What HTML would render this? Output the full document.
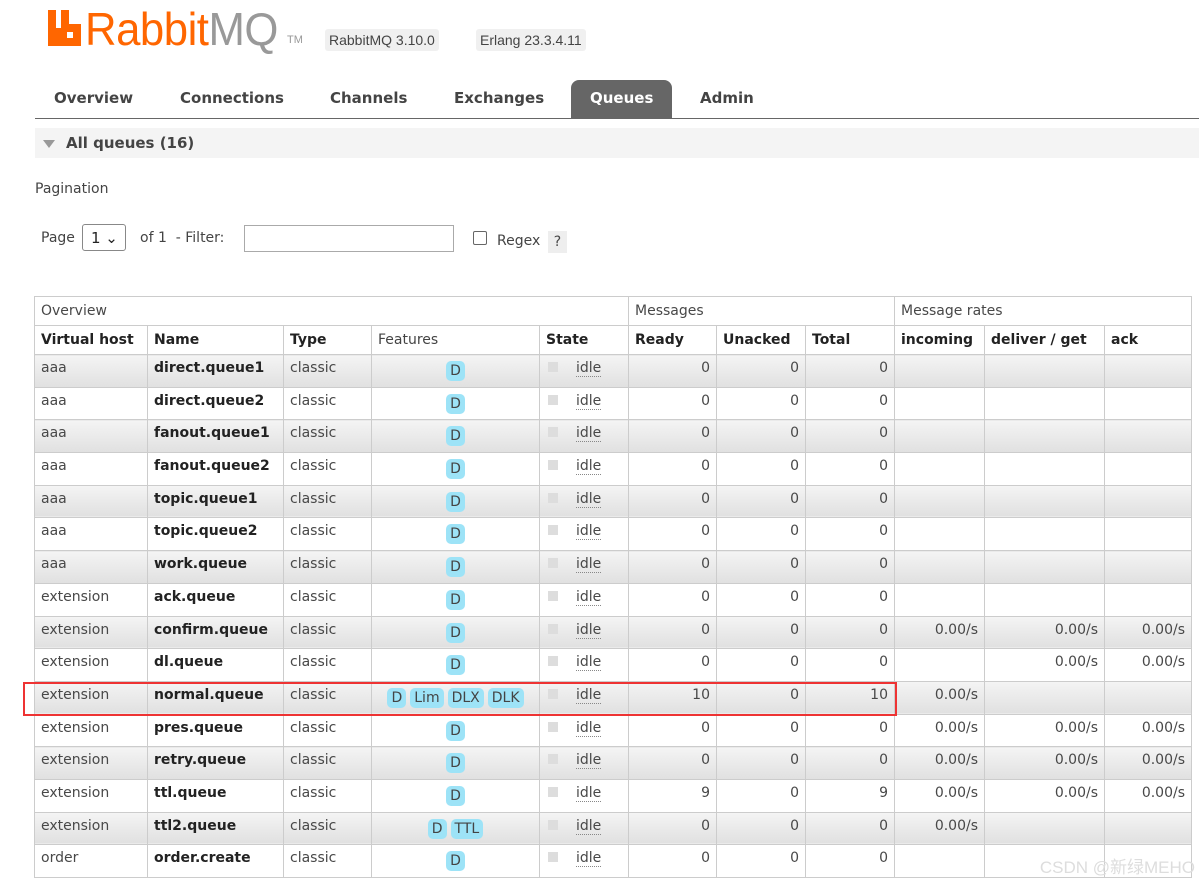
<!DOCTYPE html>
<html><head><meta charset="utf-8"><style>
body{margin:0;width:1199px;height:886px;overflow:hidden;background:#fff;font-family:Verdana,"DejaVu Sans","Liberation Sans",sans-serif;color:#484848;position:relative}
.logo{position:absolute;left:85px;top:2px;font-family:"Liberation Sans",sans-serif;font-size:46px;letter-spacing:-0.5px;transform:scaleX(0.95);transform-origin:left top;white-space:nowrap}
.logo .r{color:#f60}.logo .m{color:#999}
.tm{position:absolute;left:287px;top:34px;font-size:11px;color:#999;font-family:"Liberation Sans",sans-serif}
.ver{position:absolute;top:29px;height:22px;line-height:22px;background:#f0f0f0;border-radius:3px;padding:0 4px;font-size:14px;color:#444;font-family:"Liberation Sans",sans-serif}
.nav{position:absolute;top:80px;left:35px;right:0;height:38px;border-bottom:1px solid #666}
.nav span{position:absolute;top:0;height:38px;line-height:37px;font-size:15px;font-weight:bold;color:#444}
.nav .act{background:#666;color:#fff;border-radius:8px 8px 0 0;padding:0 19px}
.sec{position:absolute;left:35px;right:0;top:128px;height:30px;background:#f4f4f4}
.sec b{position:absolute;left:31px;top:6px;font-size:15px;color:#444}
.tri{position:absolute;left:8px;top:12px;border-left:6px solid transparent;border-right:6px solid transparent;border-top:8px solid #999}
.lbl{position:absolute;font-size:14px;color:#444}
table{position:absolute;left:34px;top:296px;border-collapse:collapse;table-layout:fixed;font-size:14px}
td,th{border:1px solid #ccc;padding:0 6px;white-space:nowrap;overflow:hidden;text-align:left}
th{font-weight:normal;height:28px}
tr.h2 th{font-weight:bold;color:#222}
tr.h2 th.n{font-weight:normal;color:#444}
tbody tr{height:32.7px}
tbody td{height:30px;line-height:27px;vertical-align:top}
tbody tr:nth-child(odd) td{background:linear-gradient(#f4f4f4,#e0e0e0)}
td.nm{font-weight:bold;color:#222}
td.r{text-align:right}
td.f{text-align:center}
.b{display:inline-block;background:#9de3f7;border-radius:5px;padding:0 4px;margin:0 2px;line-height:20px;color:#444;position:relative;top:3px}
.st{display:inline-block;width:10px;height:10px;background:#ddd;margin:0 18px 0 2px}
.idle{border-bottom:1px dotted #888}
.hl{position:absolute;left:23px;top:682px;width:870px;height:30px;border:2px solid #e33}
.wm{position:absolute;right:4px;bottom:8px;font-size:17px;color:#ddd;font-family:"Liberation Sans","Noto Sans CJK SC",sans-serif}
</style></head><body>
<svg style="position:absolute;left:48px;top:10px" width="33" height="36" viewBox="0 0 33 36"><path d="M0 0h8v18h5V0h8v14h12v22H0z" fill="#f60"/><rect x="19" y="22" width="6" height="6" fill="#fff"/></svg>
<div class="logo"><span class="r">Rabbit</span><span class="m">MQ</span></div>
<div class="tm">TM</div>
<div class="ver" style="left:325px">RabbitMQ 3.10.0</div>
<div class="ver" style="left:476px">Erlang 23.3.4.11</div>
<div class="nav">
<span style="left:19px">Overview</span><span style="left:145px">Connections</span><span style="left:295px">Channels</span><span style="left:419px">Exchanges</span><span class="act" style="left:536px">Queues</span><span style="left:665px">Admin</span>
</div>
<div class="sec"><div class="tri"></div><b>All queues (16)</b></div>
<div class="lbl" style="left:35px;top:181px">Pagination</div>
<div class="lbl" style="left:41px;top:230px">Page</div>
<div style="position:absolute;left:82px;top:224px;width:44px;height:27px;border:1px solid #888;border-radius:3px;font-size:15px;line-height:27px;padding-left:8px;box-sizing:border-box;color:#222">1 ⌄</div>
<div class="lbl" style="left:140px;top:230px">of 1 &nbsp;- Filter:</div>
<div style="position:absolute;left:244px;top:225px;width:210px;height:27px;border:1px solid #aaa;box-sizing:border-box"></div>
<div style="position:absolute;left:473px;top:231px;width:12px;height:12px;border:1px solid #666;border-radius:2px"></div>
<div class="lbl" style="left:497px;top:233px">Regex</div>
<div style="position:absolute;left:548px;top:231px;width:19px;height:22px;background:#eee;font-size:14px;text-align:center;line-height:22px">?</div>
<table>
<colgroup><col style="width:113px"><col style="width:136px"><col style="width:88px"><col style="width:168px"><col style="width:89px"><col style="width:88px"><col style="width:89px"><col style="width:89px"><col style="width:90px"><col style="width:120px"><col style="width:87px"></colgroup>
<thead>
<tr><th colspan="5">Overview</th><th colspan="3">Messages</th><th colspan="3">Message rates</th></tr>
<tr class="h2"><th>Virtual host</th><th>Name</th><th>Type</th><th class="n">Features</th><th>State</th><th>Ready</th><th>Unacked</th><th>Total</th><th>incoming</th><th>deliver / get</th><th>ack</th></tr>
</thead>
<tbody>
<tr><td>aaa</td><td class="nm">direct.queue1</td><td>classic</td><td class="f"><span class="b">D</span></td><td><span class="st"></span><span class="idle">idle</span></td><td class="r">0</td><td class="r">0</td><td class="r">0</td><td></td><td></td><td></td></tr>
<tr><td>aaa</td><td class="nm">direct.queue2</td><td>classic</td><td class="f"><span class="b">D</span></td><td><span class="st"></span><span class="idle">idle</span></td><td class="r">0</td><td class="r">0</td><td class="r">0</td><td></td><td></td><td></td></tr>
<tr><td>aaa</td><td class="nm">fanout.queue1</td><td>classic</td><td class="f"><span class="b">D</span></td><td><span class="st"></span><span class="idle">idle</span></td><td class="r">0</td><td class="r">0</td><td class="r">0</td><td></td><td></td><td></td></tr>
<tr><td>aaa</td><td class="nm">fanout.queue2</td><td>classic</td><td class="f"><span class="b">D</span></td><td><span class="st"></span><span class="idle">idle</span></td><td class="r">0</td><td class="r">0</td><td class="r">0</td><td></td><td></td><td></td></tr>
<tr><td>aaa</td><td class="nm">topic.queue1</td><td>classic</td><td class="f"><span class="b">D</span></td><td><span class="st"></span><span class="idle">idle</span></td><td class="r">0</td><td class="r">0</td><td class="r">0</td><td></td><td></td><td></td></tr>
<tr><td>aaa</td><td class="nm">topic.queue2</td><td>classic</td><td class="f"><span class="b">D</span></td><td><span class="st"></span><span class="idle">idle</span></td><td class="r">0</td><td class="r">0</td><td class="r">0</td><td></td><td></td><td></td></tr>
<tr><td>aaa</td><td class="nm">work.queue</td><td>classic</td><td class="f"><span class="b">D</span></td><td><span class="st"></span><span class="idle">idle</span></td><td class="r">0</td><td class="r">0</td><td class="r">0</td><td></td><td></td><td></td></tr>
<tr><td>extension</td><td class="nm">ack.queue</td><td>classic</td><td class="f"><span class="b">D</span></td><td><span class="st"></span><span class="idle">idle</span></td><td class="r">0</td><td class="r">0</td><td class="r">0</td><td></td><td></td><td></td></tr>
<tr><td>extension</td><td class="nm">confirm.queue</td><td>classic</td><td class="f"><span class="b">D</span></td><td><span class="st"></span><span class="idle">idle</span></td><td class="r">0</td><td class="r">0</td><td class="r">0</td><td class="r">0.00/s</td><td class="r">0.00/s</td><td class="r">0.00/s</td></tr>
<tr><td>extension</td><td class="nm">dl.queue</td><td>classic</td><td class="f"><span class="b">D</span></td><td><span class="st"></span><span class="idle">idle</span></td><td class="r">0</td><td class="r">0</td><td class="r">0</td><td></td><td class="r">0.00/s</td><td class="r">0.00/s</td></tr>
<tr><td>extension</td><td class="nm">normal.queue</td><td>classic</td><td class="f"><span class="b">D</span><span class="b">Lim</span><span class="b">DLX</span><span class="b">DLK</span></td><td><span class="st"></span><span class="idle">idle</span></td><td class="r">10</td><td class="r">0</td><td class="r">10</td><td class="r">0.00/s</td><td></td><td></td></tr>
<tr><td>extension</td><td class="nm">pres.queue</td><td>classic</td><td class="f"><span class="b">D</span></td><td><span class="st"></span><span class="idle">idle</span></td><td class="r">0</td><td class="r">0</td><td class="r">0</td><td class="r">0.00/s</td><td class="r">0.00/s</td><td class="r">0.00/s</td></tr>
<tr><td>extension</td><td class="nm">retry.queue</td><td>classic</td><td class="f"><span class="b">D</span></td><td><span class="st"></span><span class="idle">idle</span></td><td class="r">0</td><td class="r">0</td><td class="r">0</td><td class="r">0.00/s</td><td class="r">0.00/s</td><td class="r">0.00/s</td></tr>
<tr><td>extension</td><td class="nm">ttl.queue</td><td>classic</td><td class="f"><span class="b">D</span></td><td><span class="st"></span><span class="idle">idle</span></td><td class="r">9</td><td class="r">0</td><td class="r">9</td><td class="r">0.00/s</td><td class="r">0.00/s</td><td class="r">0.00/s</td></tr>
<tr><td>extension</td><td class="nm">ttl2.queue</td><td>classic</td><td class="f"><span class="b">D</span><span class="b">TTL</span></td><td><span class="st"></span><span class="idle">idle</span></td><td class="r">0</td><td class="r">0</td><td class="r">0</td><td class="r">0.00/s</td><td></td><td></td></tr>
<tr><td>order</td><td class="nm">order.create</td><td>classic</td><td class="f"><span class="b">D</span></td><td><span class="st"></span><span class="idle">idle</span></td><td class="r">0</td><td class="r">0</td><td class="r">0</td><td></td><td></td><td></td></tr>
</tbody></table>
<div class="hl"></div>
<div class="wm">CSDN @新绿MEHO</div>
</body></html>
